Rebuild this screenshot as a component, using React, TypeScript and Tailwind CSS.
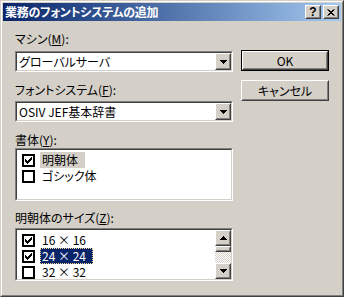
import type { ReactNode } from "react";

const FONT = "font-['Noto_Sans_CJK_JP','Noto_Sans_CJK_SC',sans-serif] [font-feature-settings:'palt']";

function Raised({ className = "", children }: { className?: string; children?: ReactNode }) {
  return (
    <div className={`border border-t-white border-l-white border-r-[#404040] border-b-[#404040] ${className}`}>
      <div className="flex h-full w-full items-center justify-center border border-t-[#d4d0c8] border-l-[#d4d0c8] border-r-[#808080] border-b-[#808080] bg-[#d4d0c8]">
        {children}
      </div>
    </div>
  );
}

function Sunken({ className = "", children }: { className?: string; children?: ReactNode }) {
  return (
    <div className={`border border-t-[#808080] border-l-[#808080] border-r-white border-b-white ${className}`}>
      <div className="flex h-full w-full border border-t-[#404040] border-l-[#404040] border-r-[#d4d0c8] border-b-[#d4d0c8] bg-white">
        {children}
      </div>
    </div>
  );
}

function Arrow({ up = false }: { up?: boolean }) {
  return (
    <svg width="7" height="4" viewBox="0 0 7 4" className={up ? "rotate-180" : ""}>
      <rect x="0" y="0" width="7" height="1" fill="#000" />
      <rect x="1" y="1" width="5" height="1" fill="#000" />
      <rect x="2" y="2" width="3" height="1" fill="#000" />
      <rect x="3" y="3" width="1" height="1" fill="#000" />
    </svg>
  );
}

function Combo({ value }: { value: string }) {
  return (
    <Sunken className="h-[21px] w-[218px]">
      <div className="flex-1 pl-[2px] text-[12px] leading-[17px] text-black">{value}</div>
      <Raised className="h-[17px] w-[16px] shrink-0">
        <Arrow />
      </Raised>
    </Sunken>
  );
}

function Check({ checked }: { checked: boolean }) {
  return (
    <div className="flex h-[13px] w-[13px] shrink-0 items-center justify-center border-2 border-black bg-white">
      {checked && (
        <svg width="7" height="7" viewBox="0 0 7 7">
          <rect x="0" y="2" width="1" height="3" fill="#000" />
          <rect x="1" y="3" width="1" height="3" fill="#000" />
          <rect x="2" y="4" width="1" height="3" fill="#000" />
          <rect x="3" y="3" width="1" height="3" fill="#000" />
          <rect x="4" y="2" width="1" height="3" fill="#000" />
          <rect x="5" y="1" width="1" height="3" fill="#000" />
          <rect x="6" y="0" width="1" height="3" fill="#000" />
        </svg>
      )}
    </div>
  );
}

type Item = { label: string; checked: boolean; sel?: "gray" | "blue" };

function Row({ item }: { item: Item }) {
  const hl =
    item.sel === "gray"
      ? "bg-[#d4d0c8] text-black border border-transparent"
      : item.sel === "blue"
      ? "bg-[#0a246a] text-white border border-dotted border-[#f5db95]"
      : "text-black border border-transparent";
  return (
    <div className="flex h-[16px] shrink-0 items-center">
      <div className="ml-[5px] mr-[5px]">
        <Check checked={item.checked} />
      </div>
      <div className={`h-[16px] pl-[1px] pr-[6px] text-[12px] leading-[14px] ${hl}`}>{item.label}</div>
    </div>
  );
}

export default function App() {
  const styles: Item[] = [
    { label: "明朝体", checked: true, sel: "gray" },
    { label: "ゴシック体", checked: false },
  ];
  const sizes: Item[] = [
    { label: "16 × 16", checked: true },
    { label: "24 × 24", checked: true, sel: "blue" },
    { label: "32 × 32", checked: false },
  ];

  return (
    <div className={`h-[297px] w-[344px] ${FONT}`}>
      <div className="h-full w-full border border-t-[#d4d0c8] border-l-[#d4d0c8] border-r-[#404040] border-b-[#404040]">
        <div className="flex h-full w-full flex-col border border-t-white border-l-white border-r-[#808080] border-b-[#808080] bg-[#d4d0c8] p-[1px]">
          {/* title bar */}
          <div className="flex h-[18px] items-center bg-gradient-to-r from-[#0a246a] to-[#a6caf0] pl-[2px] pr-[2px]">
            <span className="flex-1 text-[12px] font-bold leading-[18px] tracking-[-0.3px] text-white">業務のフォントシステムの追加</span>
            <Raised className="h-[14px] w-[16px]">
              <span className="font-['Liberation_Sans',sans-serif] text-[12px] font-bold leading-[10px] text-black">?</span>
            </Raised>
            <Raised className="ml-[2px] h-[14px] w-[16px]">
              <svg width="8" height="7" viewBox="0 0 8 7">
                <path d="M0.5 0.5 L6.5 6.5 M1.5 0.5 L7.5 6.5 M6.5 0.5 L0.5 6.5 M7.5 0.5 L1.5 6.5" stroke="#000" strokeWidth="1" />
              </svg>
            </Raised>
          </div>

          {/* body */}
          <div className="flex pl-[12px]">
            <div className="flex w-[218px] flex-col">
              <div className="mt-[10px] h-[16px] text-[12px] leading-[16px] text-black">
                マシン(<span className="underline">M</span>):
              </div>
              <div className="mt-[4px]">
                <Combo value="グローバルサーバ" />
              </div>
              <div className="mt-[10px] h-[16px] text-[12px] leading-[16px] text-black">
                フォントシステム(<span className="underline">F</span>):
              </div>
              <div className="mt-[3px]">
                <Combo value="OSIV JEF基本辞書" />
              </div>
              <div className="mt-[10px] h-[16px] text-[12px] leading-[16px] text-black">
                書体(<span className="underline">Y</span>):
              </div>
              <Sunken className="h-[53px] w-[218px]">
                <div className="flex flex-1 flex-col pt-[2px]">
                  {styles.map((s) => (
                    <Row key={s.label} item={s} />
                  ))}
                </div>
              </Sunken>
              <div className="mt-[9px] h-[16px] text-[12px] leading-[16px] text-black">
                明朝体のサイズ(<span className="underline">Z</span>):
              </div>
              <Sunken className="mt-[2px] h-[53px] w-[218px]">
                <div className="flex flex-1 flex-col overflow-hidden pt-[2px]">
                  {sizes.map((s) => (
                    <Row key={s.label} item={s} />
                  ))}
                </div>
                <div className="flex w-[16px] shrink-0 flex-col">
                  <Raised className="h-[16px] w-[16px] shrink-0">
                    <Arrow up />
                  </Raised>
                  <Raised className="h-[6px] w-[16px] shrink-0" />
                  <div className="flex-1 bg-[repeating-conic-gradient(#d4d0c8_0_25%,#ffffff_0_50%)] bg-[length:2px_2px]" />
                  <Raised className="h-[16px] w-[16px] shrink-0">
                    <Arrow />
                  </Raised>
                </div>
              </Sunken>
            </div>

            <div className="ml-[8px] flex w-[88px] flex-col">
              <div className="mt-[29px] h-[21px] border border-black">
                <Raised className="h-full w-full">
                  <span className="text-[12px] leading-[14px] text-black">OK</span>
                </Raised>
              </div>
              <Raised className="mt-[9px] h-[21px] w-full">
                <span className="text-[12px] leading-[14px] text-black">キャンセル</span>
              </Raised>
            </div>
          </div>
        </div>
      </div>
    </div>
  );
}
